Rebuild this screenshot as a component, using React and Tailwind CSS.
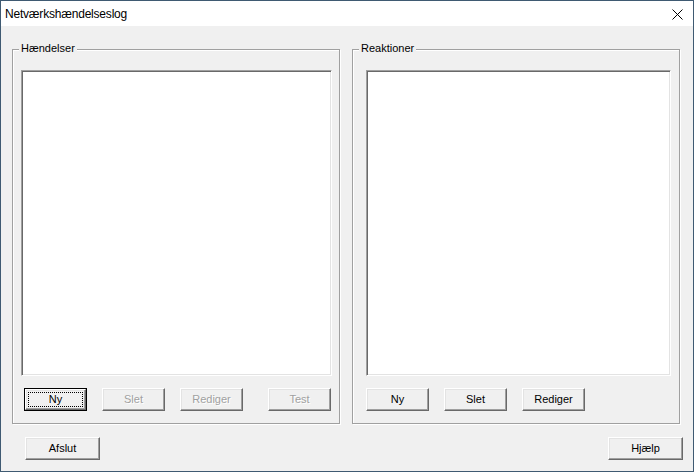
import React from "react";

const font = { fontFamily: '"Liberation Sans", Arial, sans-serif' };

function Btn({ children, disabled, isDefault, className = "" }) {
  const text = disabled
    ? "text-[#a0a0a0] [text-shadow:1px_1px_0_#ffffff]"
    : "text-black";
  if (isDefault) {
    return (
      <div className={`relative h-[23px] w-[63px] border border-[#000000] ${className}`}>
        <div className="flex h-full w-full items-center justify-center border border-t-white border-l-white border-b-[#696969] border-r-[#696969] bg-[#f0f0f0] shadow-[inset_-1px_-1px_0_#a0a0a0,inset_1px_1px_0_#e3e3e3]">
          <span className={`text-[11px] leading-none ${text}`}>{children}</span>
        </div>
        <div className="pointer-events-none absolute inset-[3px] border border-dotted border-black" />
      </div>
    );
  }
  return (
    <div
      className={`flex h-[23px] w-[63px] items-center justify-center border border-t-white border-l-white border-b-[#696969] border-r-[#696969] bg-[#f0f0f0] shadow-[inset_-1px_-1px_0_#a0a0a0,inset_1px_1px_0_#e3e3e3] ${className}`}
    >
      <span className={`text-[11px] leading-none ${text}`}>{children}</span>
    </div>
  );
}

function ListBox({ className = "" }) {
  return (
    <div
      className={`border border-t-[#a0a0a0] border-l-[#a0a0a0] border-b-white border-r-white bg-white shadow-[inset_1px_1px_0_#696969,inset_-1px_-1px_0_#e3e3e3] ${className}`}
    />
  );
}

function Group({ label, children }) {
  return (
    <div className="relative h-[375px] w-[328px] border border-[#a0a0a0] shadow-[inset_1px_1px_0_#ffffff,1px_1px_0_#ffffff]">
      <span className="absolute left-[6px] top-[-8px] bg-[#f0f0f0] px-[2px] text-[11px] leading-[13px] text-black">
        {label}
      </span>
      {children}
    </div>
  );
}

export default function App() {
  return (
    <div
      className="flex h-[472px] w-[694px] flex-col border border-[#3f5a72] bg-[#f0f0f0]"
      style={font}
    >
      <div className="flex h-[25px] shrink-0 items-center bg-white pl-[4px] pr-[9px]">
        <span className="text-[12px] tracking-[-0.2px] text-black">Netværkshændelseslog</span>
        <svg className="ml-auto" width="12" height="12" viewBox="0 0 12 12">
          <path d="M0.5 1.5 L10.5 11.5 M10.5 1.5 L0.5 11.5" stroke="#000" strokeWidth="1" fill="none" />
        </svg>
      </div>
      <div className="flex flex-1 flex-col pt-[23px]">
        <div className="flex gap-[12px] pl-[11px]">
          <Group label="Hændelser">
            <div className="flex flex-col pl-[8px] pt-[20px]">
              <ListBox className="h-[306px] w-[311px]" />
              <div className="mt-[12px] flex pl-[3px]">
                <Btn isDefault>Ny</Btn>
                <Btn disabled className="ml-[15px]">Slet</Btn>
                <Btn disabled className="ml-[15px]">Rediger</Btn>
                <Btn disabled className="ml-[25px]">Test</Btn>
              </div>
            </div>
          </Group>
          <Group label="Reaktioner">
            <div className="flex flex-col pl-[13px] pt-[20px]">
              <ListBox className="h-[306px] w-[305px]" />
              <div className="mt-[12px] flex">
                <Btn>Ny</Btn>
                <Btn className="ml-[15px]">Slet</Btn>
                <Btn className="ml-[15px]">Rediger</Btn>
              </div>
            </div>
          </Group>
        </div>
        <div className="mt-[13px] flex pl-[24px] pr-[10px]">
          <Btn className="w-[75px]">Afslut</Btn>
          <Btn className="ml-auto w-[75px]">Hjælp</Btn>
        </div>
      </div>
    </div>
  );
}
